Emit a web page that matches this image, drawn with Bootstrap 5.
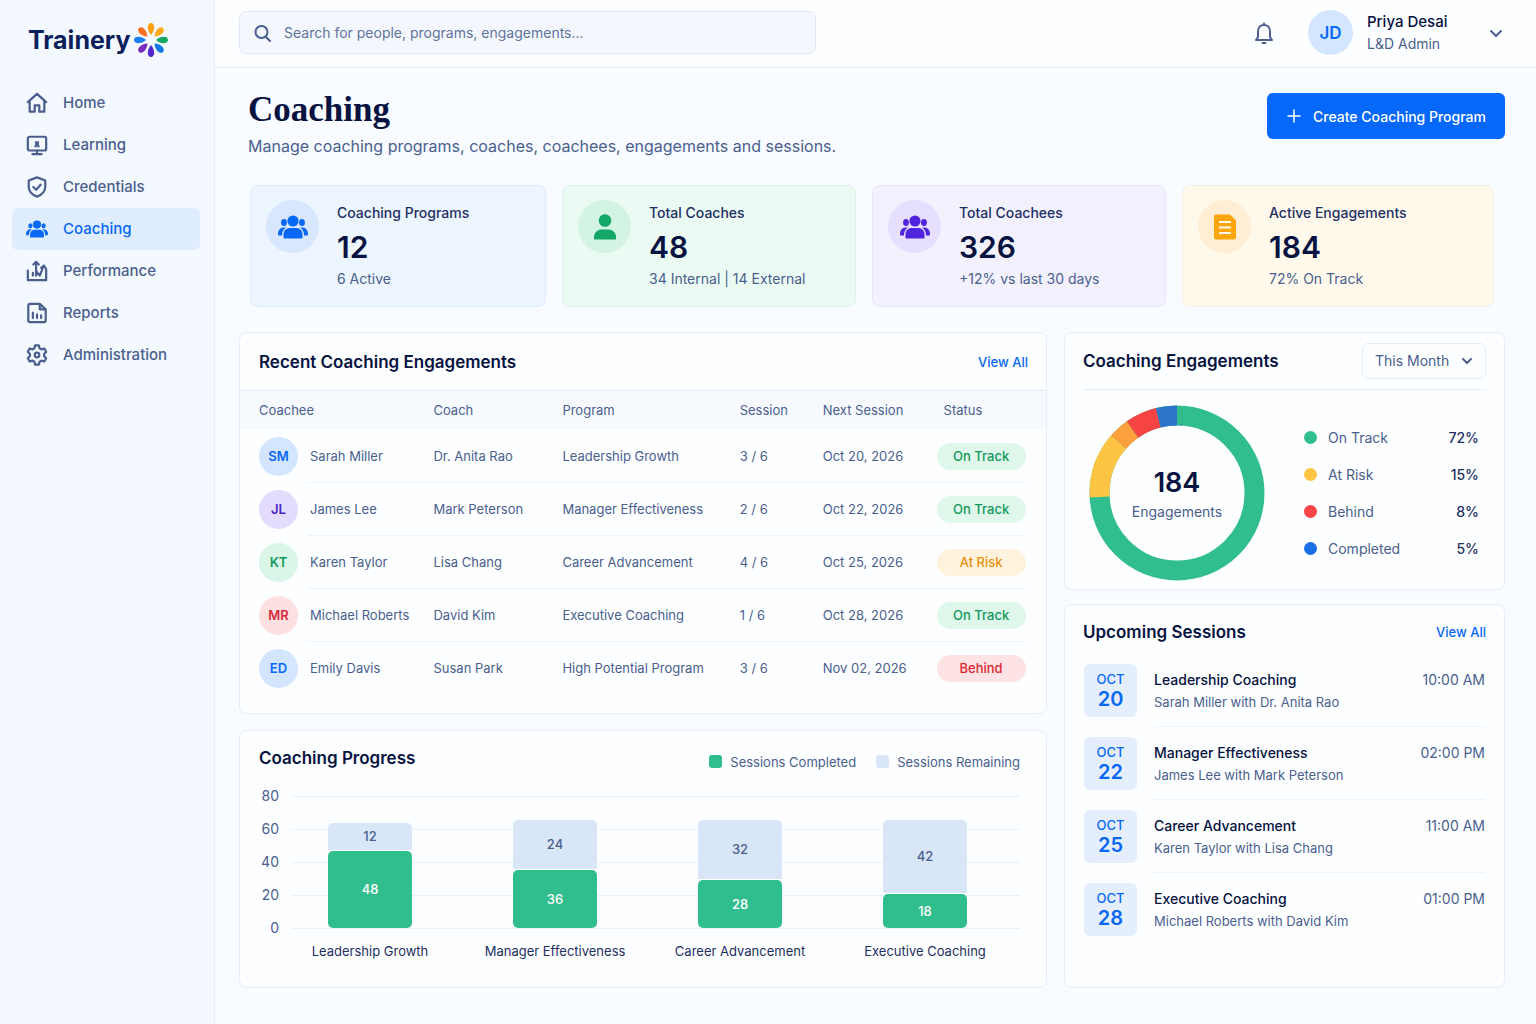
<!DOCTYPE html>
<html lang="en">
<head>
<meta charset="utf-8">
<meta name="viewport" content="width=device-width, initial-scale=1">
<title>Trainery – Coaching</title>
<link rel="stylesheet" href="https://cdn.jsdelivr.net/npm/bootstrap@5.3.0/dist/css/bootstrap.min.css">
<style>
  :root { --ink:#06123f; --navy:#1d2f63; --slate:#4a5f8e; --blue:#0768f5; --line:#e6edf9; --green:#31be8f; }
  body { font-family:Inter,"Liberation Sans",sans-serif; font-size:14px; line-height:20px; color:var(--slate); background:#f8fbff; }
  a { color:var(--blue); text-decoration:none; }
  .side { width:215px; flex:none; background:#f4f8ff; border-right:1px solid var(--line); padding:20px 14px 0 12px; }
  .brand { font-size:25px; line-height:40px; font-weight:700; color:#0a1f5c; padding-left:16px; margin-bottom:22px; gap:3px; }
  .side .nav-link { display:flex; align-items:center; gap:15px; height:42px; padding:0 14px; color:var(--slate); font-size:15px; font-weight:500; border-radius:6px; }
  .side .nav-link.active { background:#e0edff; color:var(--blue); }
  .side .nav-link svg { width:22px; height:22px; flex:none; }
  .line-icon { fill:none; stroke:currentColor; stroke-width:2; stroke-linecap:round; stroke-linejoin:round; }
  .side .line-icon { stroke-width:2.400; }
  .topbar { height:68px; background:#fdfeff; border-bottom:1px solid var(--line); padding:0 31px 2px 24px; }
  .search { width:577px; height:43px; background:#f4f8fe; border:1px solid #e0e9f6; border-radius:7px; padding:0 14px; gap:12px; color:var(--slate); }
  .search input { border:0; background:none; outline:0; width:100%; font-size:14px; color:var(--slate); padding:0; }
  .search input::placeholder { color:#61749c; opacity:1; }
  .bell { border:0; background:none; padding:0; color:var(--slate); margin-right:33px; line-height:0; }
  .profile { border:0; background:none; padding:0; text-align:left; color:var(--slate); }
  .profile-text { width:120px; line-height:22px; margin-left:14px; }
  .profile-name { font-size:15px; font-weight:500; color:var(--ink); }
  .face { width:39px; height:39px; border-radius:50%; display:flex; align-items:center; justify-content:center; font-size:13px; font-weight:600; flex:none; background:#d4e6ff; color:var(--blue); }
  .face-lg { width:45px; height:45px; font-size:17px; }
  .face-violet { background:#e3dcfd; color:#4a22c4; }
  .face-green { background:#daf6e8; color:#0f9c5c; }
  .face-red { background:#fde0e1; color:#d92b3a; }
  .main-area { padding:25px 31px 36px 24px; }
  .title-block { padding-left:9px; }
  h1 { font-family:"Liberation Serif",serif; font-weight:700; font-size:35px; line-height:34px; color:var(--ink); margin:0 0 6px; }
  .intro { font-size:16px; line-height:26px; }
  .create { background:#0568fb; --bs-btn-hover-bg:#0058e0; --bs-btn-hover-color:#fff; color:#fff; height:46px; border-radius:6px; font-size:14px; font-weight:500; padding:0 18px 0 17px; gap:10px; }
  .stats { display:grid; grid-template-columns:296fr 294fr 294fr 312fr; gap:16px; padding:0 11px; margin:26px 0 25px; }
  .stat { min-height:122px; border:1px solid #deebfa; border-radius:8px; padding:14px 15px; display:flex; gap:18px; background:#edf5ff; }
  .stat-green { background:#ebfbf3; border-color:#dff0ee; }
  .stat-violet { background:#f4f1ff; border-color:#e6e4fa; }
  .stat-amber { background:#fff9ec; border-color:#f1efe8; }
  .stat-icon { width:53px; height:53px; border-radius:50%; flex:none; display:flex; align-items:center; justify-content:center; background:#d8e6fe; color:var(--blue); }
  .stat-green .stat-icon { background:#d3f3e3; color:#13a768; }
  .stat-violet .stat-icon { background:#e6dfff; color:#5023de; }
  .stat-amber .stat-icon { background:#ffedd4; color:#ffa60d; }
  .stat-name { font-weight:500; color:var(--navy); line-height:26px; }
  .stat-value { font-size:30px; line-height:42px; font-weight:600; color:var(--ink); }
  .stat-note { line-height:22px; }
  .panels { display:grid; grid-template-columns:808fr 441fr; gap:17px; }
  .right-col { gap:14px; }
  .panel { background:#fdfeff; border:1px solid var(--line); border-radius:8px; }
  .panel h2 { font-size:17px; line-height:24px; font-weight:600; color:var(--ink); margin:0; }
  .all { font-size:13px; font-weight:500; }
  .head-row { min-height:57px; }
  .eng-panel { padding-bottom:18px; }
  .eng-head { padding:0 18px 0 19px; }
  .eng { width:100%; table-layout:fixed; font-size:13px; }
  .eng th { height:39px; font-weight:400; background:#f6faff; border-top:1px solid var(--line); padding:0; }
  .eng td { height:53px; padding:0; background:linear-gradient(#eef3fb,#eef3fb) left bottom / 100% 1px no-repeat; }
  .eng td:first-child { background-size:calc(100% - 68px) 1px; background-position:right bottom; }
  .eng td:last-child { background-size:calc(100% - 20px) 1px; }
  .eng tr:last-child td { background:none; }
  .eng th:first-child, .eng td:first-child { padding-left:19px; }
  .who { gap:12px; }
  .pill { display:inline-block; width:89px; line-height:27px; border-radius:14px; text-align:center; font-weight:500; background:#e0f7eb; color:#13995a; margin-left:-7px; }
  .pill-amber { background:#fff3de; color:#e8900c; }
  .pill-red { background:#fde3e4; color:#dc2832; }
  .dot { width:13px; height:13px; border-radius:50%; flex:none; }
  .key { width:13px; height:13px; border-radius:3px; }
  .c-green { background:var(--green); }
  .c-amber { background:#fec544; }
  .c-red { background:#f94447; }
  .c-blue { background:#1a6fe6; }
  .c-pale { background:#d9e6f8; }
  .chart-panel { padding:15px 26px 26px 19px; }
  .chart-head { margin-bottom:14px; }
  .chart-keys { gap:20px; font-size:13px; padding-top:6px; }
  .axis { width:20px; text-align:right; line-height:20px; }
  .axis div { height:33px; }
  .axis div:last-child { height:20px; }
  .plot { position:relative; margin-left:12px; }
  .rules { position:absolute; inset:10px 0 auto 0; }
  .rules i { display:block; height:33px; border-top:1px solid #ebf1fa; }
  .rules i:last-child { height:1px; }
  .bars { position:relative; display:flex; justify-content:space-between; padding:0 53px 0 37px; font-size:13px; }
  .bar-item { width:84px; }
  .stack { height:142px; display:flex; flex-direction:column; justify-content:flex-end; gap:1px; }
  .seg { display:flex; align-items:center; justify-content:center; font-weight:500; border-radius:5px 5px 0 0; }
  .seg.c-green { color:#fff; border-radius:5px; }
  .bar-name { display:flex; justify-content:center; white-space:nowrap; color:var(--navy); margin-top:13px; }
  .share-panel { padding:0 18px 8px; }
  .share-head { border-bottom:1px solid var(--line); }
  .period { width:124px; height:36px; border:1px solid var(--line); border-radius:6px; color:var(--slate); padding:0 12px; font-size:14px; appearance:none; background:#fdfeff url("data:image/svg+xml,%3Csvg xmlns='http://www.w3.org/2000/svg' viewBox='0 0 12 12' fill='none' stroke='%234a5f8e' stroke-width='2' stroke-linecap='round' stroke-linejoin='round'%3E%3Cpath d='M2 4l4 4 4-4'/%3E%3C/svg%3E") right 12px center / 12px no-repeat; }
  .donut { width:176px; flex:none; position:relative; margin:15px 0 0 6px; }
  .donut-text { position:absolute; inset:0; padding-top:61px; text-align:center; }
  .donut-num { font-size:27px; line-height:34px; font-weight:600; color:var(--ink); }
  .donut-label { line-height:24px; }
  .legend { padding:29px 7px 0 0; margin:0 0 0 39px; }
  .legend li { display:flex; align-items:center; gap:11px; height:37px; }
  .legend b { font-weight:500; color:var(--navy); margin-left:auto; }
  .sessions-panel { padding:15px 18px; }
  .session-list { margin:20px 0 0; padding:0 1px; }
  .session { display:flex; gap:17px; height:73px; }
  .session-body { display:flex; justify-content:space-between; height:63px; padding-top:4px; border-bottom:1px solid #eef3fb; }
  .session:last-child .session-body { border:0; }
  .session-name { line-height:23px; font-weight:500; color:var(--ink); }
  .session-who { font-size:13px; line-height:23px; }
  .session-time { line-height:23px; }
  .date { width:53px; height:53px; border-radius:6px; background:#e4eefd; color:var(--blue); text-align:center; flex:none; padding-top:6px; }
  .date span { display:block; font-size:13px; line-height:19px; font-weight:500; }
  .date b { display:block; font-size:20px; line-height:21px; font-weight:600; }
</style>
</head>
<body>
<svg class="d-none" xmlns="http://www.w3.org/2000/svg">
  <symbol id="people" viewBox="0 0 30 24"><g fill="currentColor"><circle cx="15" cy="6" r="5.600"/><path d="M5.500 22.500v-2.500c0-5 3-7 6.500-7h6c3.500 0 6.500 2 6.500 7v2.500q0 1-1 1h-17q-1 0-1-1z"/><ellipse cx="6" cy="7.500" rx="2.900" ry="3.500"/><ellipse cx="24" cy="7.500" rx="2.900" ry="3.500"/><path d="M8 12.500C5 14.500 4 17 4 20.500H1q-1 0-1-1c0-4 2-7 5.500-7zM22 12.500c3 2 4 4.500 4 8h3q1 0 1-1c0-4-2-7-5.500-7z"/></g></symbol>
</svg>
<div class="d-flex min-vh-100">
  <aside class="side">
    <a href="#" class="brand d-flex align-items-center">Trainery
      <svg width="36" height="36" viewBox="-18 -18 36 36" aria-hidden="true">
        <path fill="#ff9f0a" d="M0-5C-4.500-10-4-17 0-17S4.500-10 0-5z"/>
        <path fill="#fbab1c" transform="rotate(45)" d="M0-5C-4.500-10-4-17 0-17S4.500-10 0-5z"/>
        <path fill="#10a760" transform="rotate(90)" d="M0-5C-4.500-10-4-17 0-17S4.500-10 0-5z"/>
        <path fill="#1479e6" transform="rotate(135)" d="M0-5C-4.500-10-4-17 0-17S4.500-10 0-5z"/>
        <path fill="#5428cf" transform="rotate(180)" d="M0-5C-4.500-10-4-17 0-17S4.500-10 0-5z"/>
        <path fill="#7a2cc0" transform="rotate(225)" d="M0-5C-4.500-10-4-17 0-17S4.500-10 0-5z"/>
        <path fill="#1a7ff0" transform="rotate(270)" d="M0-5C-4.500-10-4-17 0-17S4.500-10 0-5z"/>
        <path fill="#fb7123" transform="rotate(315)" d="M0-5C-4.500-10-4-17 0-17S4.500-10 0-5z"/>
      </svg>
    </a>
    <nav class="nav flex-column flex-nowrap">
      <a class="nav-link" href="#"><svg class="line-icon" viewBox="0 0 24 24"><path d="M2 11L12 2l10 9M4 9.500V21.500h5.500v-7h5v7H20V9.500"/></svg>Home</a>
      <a class="nav-link" href="#"><svg class="line-icon" viewBox="0 0 24 24"><rect x="2" y="3" width="20" height="15" rx="2"/><path d="M7 22h10M12 18v4"/><path fill="currentColor" stroke-width="1" d="M9.500 13.500l1.200-2.500-.7-2.500h4l-.7 2.500 1.200 2.500z"/></svg>Learning</a>
      <a class="nav-link" href="#"><svg class="line-icon" viewBox="0 0 24 24"><path d="M12 1.500l9 3.500v7c0 5-4 8.500-9 10.500-5-2-9-5.500-9-10.500V5z"/><path d="M8 12l3 3 5-5.500"/></svg>Credentials</a>
      <a class="nav-link active" href="#" aria-current="page"><svg><use href="#people"/></svg>Coaching</a>
      <a class="nav-link" href="#"><svg class="line-icon" viewBox="0 0 24 24"><path d="M2 11.500V22h20V10M7.500 17v-3M11 17V3M8 5l3-3 3 3M11 12l4 5 4-10M16.500 8.500L19.500 6l2 3"/></svg>Performance</a>
      <a class="nav-link" href="#"><svg class="line-icon" viewBox="0 0 24 24"><path d="M15 2H4.500Q2.500 2 2.500 4v16q0 2 2 2h15q2 0 2-2V8zM15 2v6h6.500M7.500 11.500v6M12 13.500v4M16.500 14.500v3"/></svg>Reports</a>
      <a class="nav-link" href="#"><svg class="line-icon" viewBox="0 0 24 24"><path d="M10 1.500h4l.8 3.200 2 1.200 3.200-1 2 3.500L19.700 11v2l2.300 2.600-2 3.500-3.200-1-2 1.200-.8 3.200h-4l-.8-3.200-2-1.200-3.200 1-2-3.500L4.300 13v-2L2 8.400l2-3.500 3.200 1 2-1.200z"/><circle cx="12" cy="12" r="2.500"/></svg>Administration</a>
    </nav>
  </aside>
  <div class="flex-grow-1">
    <header class="topbar d-flex align-items-center justify-content-between">
      <form class="search d-flex align-items-center" role="search">
        <svg class="line-icon flex-shrink-0" width="18" height="18" viewBox="0 0 18 18"><circle cx="7.500" cy="8" r="6"/><path d="M12 13l4 4"/></svg>
        <input type="search" aria-label="Search" placeholder="Search for people, programs, engagements...">
      </form>
      <div class="d-flex align-items-center">
        <button class="bell" type="button" aria-label="Notifications"><svg class="line-icon" width="22" height="24" viewBox="0 0 22 24"><path d="M3 19h16l-2-3v-5.500C17 6.500 14.500 4 11 4s-6 2.500-6 6.500V16zM11 4V2.500M9.500 22h3"/></svg></button>
        <button class="profile d-flex align-items-center" type="button">
          <span class="face face-lg">JD</span>
          <span class="profile-text"><span class="d-block profile-name">Priya Desai</span><span class="d-block">L&amp;D Admin</span></span>
          <svg class="line-icon" width="18" height="18" viewBox="0 0 18 18"><path d="M4 7l5 5 5-5"/></svg>
        </button>
      </div>
    </header>
    <main class="main-area">
      <div class="d-flex justify-content-between align-items-start">
        <div class="title-block"><h1>Coaching</h1><div class="intro">Manage coaching programs, coaches, coachees, engagements and sessions.</div></div>
        <button class="btn create d-flex align-items-center" type="button"><svg class="line-icon" width="18" height="18" viewBox="0 0 18 18"><path stroke-width="1.500" d="M9 3v12M3 9h12"/></svg>Create Coaching Program</button>
      </div>
      <section class="stats">
        <div class="stat"><div class="stat-icon"><svg width="30" height="24"><use href="#people"/></svg></div><div><div class="stat-name">Coaching Programs</div><div class="stat-value">12</div><div class="stat-note">6 Active</div></div></div>
        <div class="stat stat-green"><div class="stat-icon"><svg width="24" height="26" viewBox="0 0 24 26" fill="currentColor"><circle cx="12" cy="6.500" r="6.300"/><path d="M1 25.500v-2.500c0-5 4-7.500 8-7.500h6c4 0 8 2.500 8 7.500v2.500z"/></svg></div><div><div class="stat-name">Total Coaches</div><div class="stat-value">48</div><div class="stat-note">34 Internal | 14 External</div></div></div>
        <div class="stat stat-violet"><div class="stat-icon"><svg width="30" height="24"><use href="#people"/></svg></div><div><div class="stat-name">Total Coachees</div><div class="stat-value">326</div><div class="stat-note">+12% vs last 30 days</div></div></div>
        <div class="stat stat-amber"><div class="stat-icon"><svg width="22" height="26" viewBox="0 0 22 26"><path fill="currentColor" d="M2 .5h14l6 6v17q0 2-2 2H2q-2 0-2-2v-21q0-2 2-2z"/><path stroke="#fff7e9" stroke-width="2" d="M5 8h12M5 13.500h12M5 19h12"/></svg></div><div><div class="stat-name">Active Engagements</div><div class="stat-value">184</div><div class="stat-note">72% On Track</div></div></div>
      </section>
      <div class="panels">
        <div class="d-flex flex-column gap-3">
          <section class="panel eng-panel">
            <div class="head-row eng-head d-flex align-items-center justify-content-between"><h2>Recent Coaching Engagements</h2><a class="all" href="#">View All</a></div>
            <table class="eng">
              <colgroup><col style="width:24%"><col style="width:16%"><col style="width:22%"><col style="width:10.300%"><col style="width:15%"><col></colgroup>
              <thead><tr><th>Coachee</th><th>Coach</th><th>Program</th><th>Session</th><th>Next Session</th><th>Status</th></tr></thead>
              <tbody>
                <tr><td><div class="d-flex align-items-center who"><span class="face">SM</span>Sarah Miller</div></td><td>Dr. Anita Rao</td><td>Leadership Growth</td><td>3 / 6</td><td>Oct 20, 2026</td><td><span class="pill">On Track</span></td></tr>
                <tr><td><div class="d-flex align-items-center who"><span class="face face-violet">JL</span>James Lee</div></td><td>Mark Peterson</td><td>Manager Effectiveness</td><td>2 / 6</td><td>Oct 22, 2026</td><td><span class="pill">On Track</span></td></tr>
                <tr><td><div class="d-flex align-items-center who"><span class="face face-green">KT</span>Karen Taylor</div></td><td>Lisa Chang</td><td>Career Advancement</td><td>4 / 6</td><td>Oct 25, 2026</td><td><span class="pill pill-amber">At Risk</span></td></tr>
                <tr><td><div class="d-flex align-items-center who"><span class="face face-red">MR</span>Michael Roberts</div></td><td>David Kim</td><td>Executive Coaching</td><td>1 / 6</td><td>Oct 28, 2026</td><td><span class="pill">On Track</span></td></tr>
                <tr><td><div class="d-flex align-items-center who"><span class="face">ED</span>Emily Davis</div></td><td>Susan Park</td><td>High Potential Program</td><td>3 / 6</td><td>Nov 02, 2026</td><td><span class="pill pill-red">Behind</span></td></tr>
              </tbody>
            </table>
          </section>
          <section class="panel chart-panel flex-grow-1">
            <div class="chart-head d-flex justify-content-between">
              <h2>Coaching Progress</h2>
              <div class="chart-keys d-flex"><span class="d-flex align-items-center gap-2"><span class="key c-green"></span>Sessions Completed</span><span class="d-flex align-items-center gap-2"><span class="key c-pale"></span>Sessions Remaining</span></div>
            </div>
            <div class="d-flex">
              <div class="axis"><div>80</div><div>60</div><div>40</div><div>20</div><div>0</div></div>
              <div class="plot flex-grow-1">
                <div class="rules"><i></i><i></i><i></i><i></i><i></i></div>
                <div class="bars">
                  <div class="bar-item"><div class="stack"><div class="seg c-pale" style="height:27px">12</div><div class="seg c-green" style="height:77px">48</div></div><div class="bar-name">Leadership Growth</div></div>
                  <div class="bar-item"><div class="stack"><div class="seg c-pale" style="height:49px">24</div><div class="seg c-green" style="height:58px">36</div></div><div class="bar-name">Manager Effectiveness</div></div>
                  <div class="bar-item"><div class="stack"><div class="seg c-pale" style="height:59px">32</div><div class="seg c-green" style="height:48px">28</div></div><div class="bar-name">Career Advancement</div></div>
                  <div class="bar-item"><div class="stack"><div class="seg c-pale" style="height:73px">42</div><div class="seg c-green" style="height:34px">18</div></div><div class="bar-name">Executive Coaching</div></div>
                </div>
              </div>
            </div>
          </section>
        </div>
        <div class="d-flex flex-column right-col">
          <section class="panel share-panel">
            <div class="head-row share-head d-flex align-items-center justify-content-between"><h2>Coaching Engagements</h2><select class="period" aria-label="Period"><option>This Month</option><option>Last Month</option></select></div>
            <div class="d-flex">
              <div class="donut">
                <svg class="d-block" width="176" height="176" viewBox="0 0 176 176" fill="none" stroke-width="20" aria-hidden="true">
                  <g transform="rotate(-90 88 88)">
                    <circle cx="88" cy="88" r="77.500" stroke="#31be8f"/>
                    <circle cx="88" cy="88" r="77.500" stroke="#fec544" pathLength="360" stroke-dasharray="44 316" stroke-dashoffset="-267"/>
                    <circle cx="88" cy="88" r="77.500" stroke="#fd9f3d" pathLength="360" stroke-dasharray="14 346" stroke-dashoffset="-311"/>
                    <circle cx="88" cy="88" r="77.500" stroke="#f54442" pathLength="360" stroke-dasharray="21 339" stroke-dashoffset="-325"/>
                    <circle cx="88" cy="88" r="77.500" stroke="#2f74cb" pathLength="360" stroke-dasharray="14 346" stroke-dashoffset="-346"/>
                  </g>
                </svg>
                <div class="donut-text"><div class="donut-num">184</div><div class="donut-label">Engagements</div></div>
              </div>
              <ul class="legend list-unstyled flex-grow-1">
                <li><span class="dot c-green"></span>On Track<b>72%</b></li>
                <li><span class="dot c-amber"></span>At Risk<b>15%</b></li>
                <li><span class="dot c-red"></span>Behind<b>8%</b></li>
                <li><span class="dot c-blue"></span>Completed<b>5%</b></li>
              </ul>
            </div>
          </section>
          <section class="panel sessions-panel flex-grow-1">
            <div class="d-flex align-items-center justify-content-between"><h2>Upcoming Sessions</h2><a class="all" href="#">View All</a></div>
            <ul class="session-list list-unstyled">
              <li class="session"><div class="date"><span>OCT</span><b>20</b></div><div class="session-body flex-grow-1"><div><div class="session-name">Leadership Coaching</div><div class="session-who">Sarah Miller with Dr. Anita Rao</div></div><div class="session-time">10:00 AM</div></div></li>
              <li class="session"><div class="date"><span>OCT</span><b>22</b></div><div class="session-body flex-grow-1"><div><div class="session-name">Manager Effectiveness</div><div class="session-who">James Lee with Mark Peterson</div></div><div class="session-time">02:00 PM</div></div></li>
              <li class="session"><div class="date"><span>OCT</span><b>25</b></div><div class="session-body flex-grow-1"><div><div class="session-name">Career Advancement</div><div class="session-who">Karen Taylor with Lisa Chang</div></div><div class="session-time">11:00 AM</div></div></li>
              <li class="session"><div class="date"><span>OCT</span><b>28</b></div><div class="session-body flex-grow-1"><div><div class="session-name">Executive Coaching</div><div class="session-who">Michael Roberts with David Kim</div></div><div class="session-time">01:00 PM</div></div></li>
            </ul>
          </section>
        </div>
      </div>
    </main>
  </div>
</div>
<script src="https://cdn.jsdelivr.net/npm/bootstrap@5.3.0/dist/js/bootstrap.bundle.min.js"></script>
</body>
</html>
